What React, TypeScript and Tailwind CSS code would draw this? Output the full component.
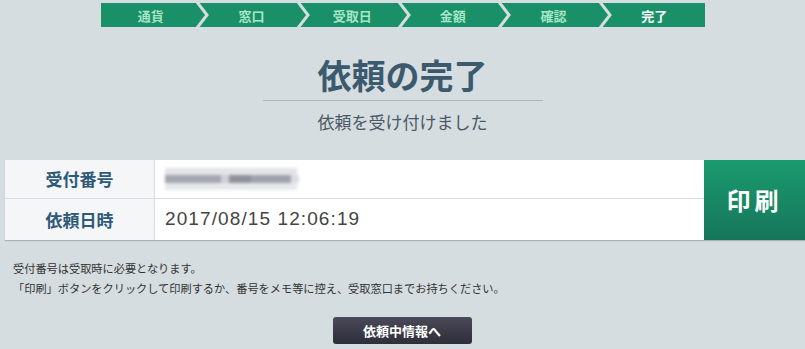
const steps = ["通貨", "窓口", "受取日", "金額", "確認", "完了"];

const font = {
  fontFamily: '"Noto Sans CJK JP", "Noto Sans", sans-serif',
};

function StepBar() {
  return (
    <div className="mx-auto mt-[3px] flex h-6 w-[604px] bg-[#1a9068]">
      {steps.map((s, i) => {
        const last = i === steps.length - 1;
        return (
          <div key={s} className="relative flex flex-1 items-center justify-center">
            <span
              className={
                "text-[13px] font-bold leading-none " +
                (last ? "text-white" : "text-[#a6e5c6]")
              }
            >
              {s}
            </span>
            {!last && (
              <svg
                className="absolute top-0 right-[-9px] z-10"
                width="14"
                height="24"
                viewBox="0 0 14 24"
              >
                <polyline
                  points="1,-1 11,12 1,25"
                  fill="none"
                  stroke="#d5dde0"
                  strokeWidth="3"
                />
              </svg>
            )}
          </div>
        );
      })}
    </div>
  );
}

function BlurredNumber() {
  return (
    <div className="relative h-6 w-[136px] blur-[1.5px]">
      <div className="absolute top-[1px] left-0 h-[7px] w-[132px] bg-[#e2e4e8]" />
      <div className="absolute top-[8px] left-0 h-[8px] w-[56px] bg-[#a4a7b0]" />
      <div className="absolute top-[8px] left-[56px] h-[8px] w-[8px] bg-[#cfd1d6]" />
      <div className="absolute top-[8px] left-[64px] h-[8px] w-[22px] bg-[#8e919a]" />
      <div className="absolute top-[8px] left-[86px] h-[8px] w-[40px] bg-[#a0a3ac]" />
      <div className="absolute top-[8px] left-[126px] h-[8px] w-[8px] bg-[#dcdee2]" />
      <div className="absolute top-[16px] left-0 h-[7px] w-[132px] bg-[#e6e8eb]" />
    </div>
  );
}

export default function App() {
  return (
    <div className="h-[349px] w-[805px] overflow-hidden bg-[#d5dde0]" style={font}>
      <StepBar />

      <div className="flex flex-col items-center">
        <h1 className="mt-[24px] text-[34px] leading-[48px] font-bold text-[#3c5a6e]">
          依頼の完了
        </h1>
        <div className="mt-[1px] h-px w-[280px] bg-[#aeb8bc]" />
        <p className="mt-[9px] text-[17px] leading-[24px] text-[#4a5965]">
          依頼を受け付けました
        </p>
      </div>

      <div className="mt-[26px] ml-[5px] flex h-[80px] shadow-[0_1px_1px_rgba(0,0,0,0.2)]">
        <div className="flex flex-1 flex-col bg-white">
          <div className="flex h-[39px] border-b border-[#d6dcdf]">
            <div className="flex w-[150px] items-center justify-center border-r border-[#d6dcdf] bg-[#f4f6f7] text-[17px] font-bold text-[#2e5977]">
              受付番号
            </div>
            <div className="flex items-center pl-[10px]">
              <BlurredNumber />
            </div>
          </div>
          <div className="flex flex-1">
            <div className="flex w-[150px] items-center justify-center border-r border-[#d6dcdf] bg-[#f4f6f7] text-[17px] font-bold text-[#2e5977]">
              依頼日時
            </div>
            <div
              className="flex items-center pl-[10px] text-[19px] tracking-[1.1px] text-[#444444]"
              style={{ fontFamily: '"Liberation Sans", sans-serif' }}
            >
              2017/08/15 12:06:19
            </div>
          </div>
        </div>
        <button className="flex w-[101px] items-center justify-center bg-gradient-to-b from-[#1a9b6f] to-[#16765a] text-[24px] font-bold tracking-[4px] text-white">
          印刷
        </button>
      </div>

      <div className="mt-[18px] pl-[13px] text-[11.2px] leading-[20px] text-[#333333]">
        <p>受付番号は受取時に必要となります。</p>
        <p>「印刷」ボタンをクリックして印刷するか、番号をメモ等に控え、受取窓口までお持ちください。</p>
      </div>

      <div className="mt-[19px] flex justify-center pr-[1px]">
        <button className="flex h-[27px] w-[139px] items-center justify-center rounded-[3px] bg-gradient-to-b from-[#4a4a58] to-[#2e2e3a] text-[13px] font-bold text-white">
          依頼中情報へ
        </button>
      </div>
    </div>
  );
}
